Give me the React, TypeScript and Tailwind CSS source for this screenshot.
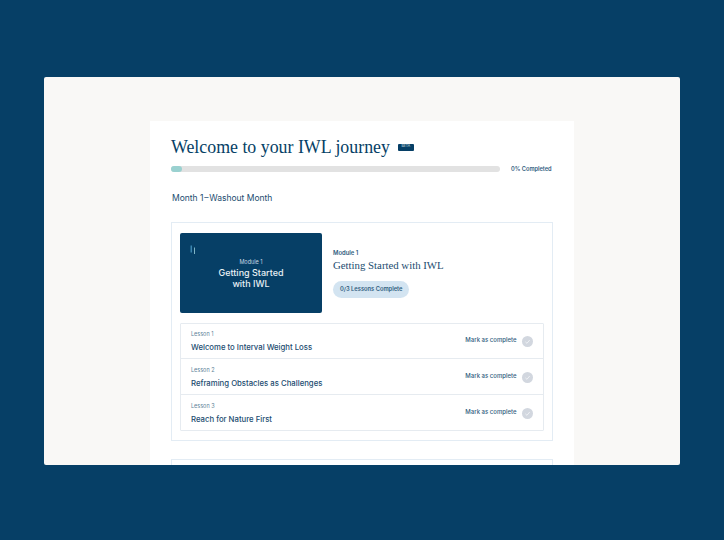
const lessons = [
  { label: "Lesson 1", title: "Welcome to Interval Weight Loss" },
  { label: "Lesson 2", title: "Reframing Obstacles as Challenges" },
  { label: "Lesson 3", title: "Reach for Nature First" }
];

const serif = "font-['Liberation_Serif',serif]";

function CheckCircle() {
  return (
    <span className="flex h-[11px] w-[11px] items-center justify-center rounded-full bg-[#d2d7df]">
      <svg width="7" height="7" viewBox="0 0 10 10" fill="none" stroke="#f1f3f6" strokeWidth="1.3">
        <path d="M2 5.5 4.2 7.6 8.2 2.8" />
      </svg>
    </span>
  );
}

function LessonRow({ label, title }: { label: string; title: string }) {
  return (
    <div className="group flex h-9 items-center justify-between border-b border-[#e6ebf0] pl-[10px] pr-[10px] first:h-[35px] last:h-[35px] last:border-b-0">
      <div className="pt-[1px]">
        <p className="text-[5.5px] leading-[8px] text-[#5d7f97]">{label}</p>
        <p className="mt-[4px] text-[7.75px] font-medium leading-[11px] text-[#1b4c70]">{title}</p>
      </div>
      <div className="mt-[2px] flex items-center gap-[5.5px] group-first:mt-0">
        <span className="mb-[4px] text-[6px] font-medium text-[#2f5d7e]">Mark as complete</span>
        <CheckCircle />
      </div>
    </div>
  );
}

export default function App() {
  return (
    <div className="h-[540px] w-[724px] overflow-hidden bg-[#063f66] pl-[44px] pt-[77px] font-['Inter',sans-serif]">
      <div className="h-[388px] w-[636px] overflow-hidden rounded-[2px] bg-[#f9f8f6] pl-[106px] pt-[44px]">
        <main className="w-[424px] bg-white px-[21px] pt-[14px] pb-6">
          <div className="flex items-center gap-2">
            <h1 className={`${serif} text-[17.85px] leading-[24px] text-[#063f66]`}>Welcome to your IWL journey</h1>
            <span className="flex h-[7px] items-center rounded-[1px] bg-[#063f66] px-[3.5px] text-[3.5px] leading-none text-[#cfe0ea]">BETA</span>
          </div>

          <div className="mt-[7px] flex items-center">
            <div className="h-[6px] w-[329px] rounded-full bg-[#e2e2e2]">
              <div className="h-[6px] w-[11px] rounded-full bg-[#9ad1d0]" />
            </div>
            <span className="ml-[11px] text-[5.65px] font-semibold leading-[6px] text-[#2f5d7e]">0% Completed</span>
          </div>

          <h2 className="ml-[1px] mt-[19px] text-[8.5px] leading-[14px] text-[#1b4c70]">Month 1{"\u200a"}–{"\u200a"}Washout Month</h2>

          <section className="mt-[17px] w-[382px] border border-[#e3ecf4] px-[8px] pb-[9px] pt-[10px]">
            <div className="flex items-center">
              <div className="relative flex h-[80px] w-[142px] flex-col items-center justify-center rounded-[2px] bg-[#063f66] text-center">
                <svg className="absolute left-[10px] top-[12px]" width="6" height="10" viewBox="0 0 6 10">
                  <rect x="0.5" y="0.5" width="1.5" height="7" fill="#3a86b0" />
                  <rect x="4" y="2.5" width="1" height="6.5" fill="#7fb4c4" />
                </svg>
                <p className="text-[5.5px] leading-[8px] text-[#c5d6e2]">Module 1</p>
                <p className="mt-[1px] text-[9px] font-medium leading-[11px] text-[#e8f0f5]">
                  Getting Started
                  <br />
                  with IWL
                </p>
              </div>
              <div className="ml-[11px]">
                <p className="text-[5.9px] font-semibold leading-[8px] text-[#2f5d7e]">Module 1</p>
                <p className={`${serif} mt-[1px] text-[10.8px] leading-[14px] text-[#1b4c70]`}>Getting Started with IWL</p>
                <span className="mt-[9px] inline-flex h-[17px] items-center rounded-full bg-[#d3e4f1] px-[7px] text-[5.75px] font-semibold text-[#2f5d7e]">
                  0/3 Lessons Complete
                </span>
              </div>
            </div>

            <div className="mt-[10px] rounded-[1px] border border-[#e6ebf0]">
              {lessons.map((lesson) => (
                <LessonRow key={lesson.label} label={lesson.label} title={lesson.title} />
              ))}
            </div>
          </section>

          <section className="mt-[18px] h-24 w-[382px] border border-[#e3ecf4]" />
        </main>
      </div>
    </div>
  );
}
